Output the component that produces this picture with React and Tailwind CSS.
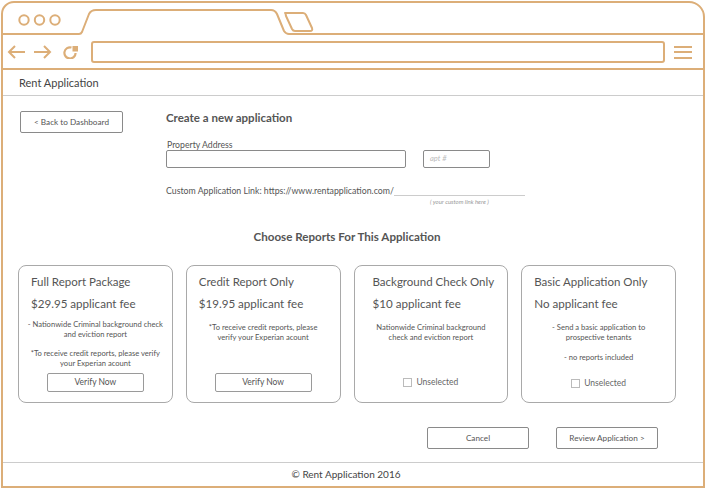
import React from "react";

const TAN = "#dcae78";

function Card({ title, price, pl, children, footer }) {
  return (
    <div className="w-[155px] h-[138px] border border-[#a9a9a9] rounded-[8px] flex flex-col pt-[9px] pb-[10px]">
      <div className={`${pl} text-[11.5px] leading-[14px] text-[#555]`}>{title}</div>
      <div className={`${pl} mt-[7px] text-[11.6px] leading-[15px] text-[#555]`}>{price}</div>
      {children}
      <div className="mt-auto flex justify-center">{footer}</div>
    </div>
  );
}

function VerifyBtn() {
  return (
    <div className="w-[97px] h-[19px] border border-[#9a9a9a] rounded-[2px] flex items-center justify-center text-[8.5px] text-[#555]">
      Verify Now
    </div>
  );
}

function Unselected({ mb }) {
  return (
    <div className={`flex items-center gap-[4px] ${mb}`}>
      <div className="w-[9px] h-[9px] border border-[#bbb]" />
      <span className="text-[8.5px] leading-[10px] text-[#666]">Unselected</span>
    </div>
  );
}

export default function App() {
  return (
    <div className="w-[706px] h-[489px] bg-white p-[1px] font-['Lato',sans-serif]">
      <div className="w-full h-[487px] border-2 border-[#dcae78] rounded-tl-[13px] rounded-tr-[16px] flex flex-col overflow-hidden">
        {/* tab row */}
        <svg width="700" height="32" viewBox="0 0 700 32" className="block shrink-0" fill="none" stroke={TAN} strokeWidth="2" strokeLinejoin="round">
          <circle cx="21" cy="17" r="4.7" />
          <circle cx="36.5" cy="17" r="4.7" />
          <circle cx="52" cy="17" r="4.7" />
          <path d="M0,31 H76 Q78,31 79,29 L86,11 Q88,7 93,7 H268 Q272,7 274,11 L281,28 Q283,31 286,31 H700" />
          <path d="M282,10 H300 Q302,10 303,12 L309,25 Q310,28 307,28 H292 Q290,28 289,26 L283,13 Q282,10 284,10 Z" />
        </svg>
        {/* toolbar */}
        <div className="h-[35px] shrink-0 border-b-2 border-[#dcae78] flex items-center pl-[4px] pr-[11px]">
          <svg width="18" height="14" viewBox="0 0 18 14" fill="none" stroke={TAN} strokeWidth="2" className="shrink-0">
            <path d="M18,7 H2 M8,1 L2,7 L8,13" />
          </svg>
          <svg width="18" height="14" viewBox="0 0 18 14" fill="none" stroke={TAN} strokeWidth="2" className="shrink-0 ml-[9px]">
            <path d="M0,7 H16 M10,1 L16,7 L10,13" />
          </svg>
          <svg width="16" height="14" viewBox="0 0 16 14" fill="none" className="shrink-0 ml-[11px]">
            <path d="M12.6,8 A5.6,5.6 0 1 1 8.5,2.5" stroke={TAN} strokeWidth="2.2" />
            <rect x="9.5" y="1" width="5.5" height="5.5" fill={TAN} />
          </svg>
          <div className="flex-1 h-[22px] ml-[12px] border-2 border-[#dcae78] rounded-[3px]" />
          <svg width="18" height="14" viewBox="0 0 18 14" fill="none" stroke={TAN} strokeWidth="2" className="shrink-0 ml-[9px]">
            <path d="M0,2 H18 M0,7 H18 M0,13 H18" />
          </svg>
        </div>
        {/* header */}
        <div className="h-[26px] shrink-0 border-b border-[#cccccc] flex items-center pl-[16px] pt-[1px] text-[11px] text-[#444]">
          Rent Application
        </div>
        {/* main */}
        <div className="flex-1 flex flex-col">
          <div className="flex">
            <div className="w-[163px] pl-[17px] pt-[15px]">
              <div className="w-[103px] h-[22px] border border-[#8a8a8a] rounded-[2px] flex items-center justify-center text-[8.2px] text-[#555]">
                &lt; Back to Dashboard
              </div>
            </div>
            <div className="pt-[15px] flex flex-col">
              <div className="text-[11.5px] leading-[14px] font-bold text-[#555]">Create a new application</div>
              <div className="mt-[15px] pl-[1px] text-[8.7px] leading-[10px] text-[#555]">Property Address</div>
              <div className="flex">
                <div className="w-[240px] h-[18px] border border-[#8a8a8a] rounded-[2px]" />
                <div className="ml-[17px] w-[67px] h-[18px] border border-[#8a8a8a] rounded-[2px] flex items-center pl-[6px] text-[7.5px] italic text-[#bbb]">
                  apt #
                </div>
              </div>
              <div className="mt-[18px] flex items-start">
                <span className="text-[8.75px] leading-[10px] text-[#555]">Custom Application Link: https://www.rentapplication.com/</span>
                <div className="flex flex-col w-[131px]">
                  <div className="h-[10px] border-b border-[#cccccc]" />
                  <div className="mt-[2px] text-center text-[6px] leading-[7px] italic text-[#999]">( your custom link here )</div>
                </div>
              </div>
            </div>
          </div>

          <div className="pl-[15px] pr-[27px] flex flex-col">
            <div className="mt-[25px] text-center text-[11.6px] leading-[14px] font-bold text-[#555]">
              Choose Reports For This Application
            </div>
            <div className="mt-[21px] flex gap-[13px]">
              <Card title="Full Report Package" price="$29.95 applicant fee" pl="pl-[12px]" footer={<VerifyBtn />}>
                <div className="mt-[8px] text-center text-[7.6px] leading-[10px] text-[#555] px-[4px]">
                  - Nationwide Criminal background check and eviction report
                </div>
                <div className="mt-[9px] text-center text-[7.6px] leading-[10px] text-[#555] px-[4px]">
                  *To receive credit reports, please verify your Experian acount
                </div>
              </Card>
              <Card title="Credit Report Only" price="$19.95 applicant fee" pl="pl-[12px]" footer={<VerifyBtn />}>
                <div className="mt-[11px] text-center text-[7.6px] leading-[10px] text-[#555] px-[14px]">
                  *To receive credit reports, please verify your Experian acount
                </div>
              </Card>
              <Card title="Background Check Only" price="$10 applicant fee" pl="pl-[18px]" footer={<Unselected mb="mb-[5px]" />}>
                <div className="mt-[11px] text-center text-[7.6px] leading-[10px] text-[#555] px-[14px]">
                  Nationwide Criminal background check and eviction report
                </div>
              </Card>
              <Card title="Basic Application Only" price="No applicant fee" pl="pl-[12px]" footer={<Unselected mb="mb-[4px]" />}>
                <div className="mt-[11px] text-center text-[7.6px] leading-[10px] text-[#555] px-[18px]">
                  - Send a basic application to prospective tenants
                </div>
                <div className="mt-[10px] text-center text-[7.6px] leading-[10px] text-[#555]">
                  - no reports included
                </div>
              </Card>
            </div>
            <div className="mt-[24px] flex justify-end gap-[27px] pr-[18px]">
              <div className="w-[102px] h-[22px] border border-[#8a8a8a] rounded-[2px] flex items-center justify-center text-[8.2px] text-[#555]">
                Cancel
              </div>
              <div className="w-[102px] h-[22px] border border-[#8a8a8a] rounded-[2px] flex items-center justify-center text-[8.2px] text-[#555]">
                Review Application &gt;
              </div>
            </div>
          </div>
        </div>
        {/* footer */}
        <div className="h-[24px] shrink-0 border-t border-[#cccccc] flex items-center justify-center pr-[14px] text-[10px] text-[#444]">
          © Rent Application 2016
        </div>
      </div>
    </div>
  );
}
